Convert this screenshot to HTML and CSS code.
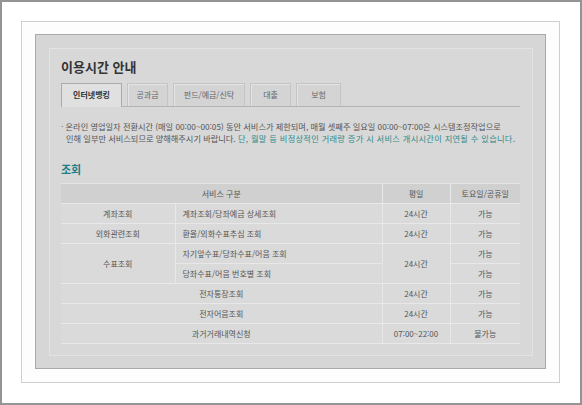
FILE: index.html
```html
<!DOCTYPE html>
<html lang="ko">
<head>
<meta charset="utf-8">
<title>이용시간 안내</title>
<link rel="stylesheet" href="styles.css">
</head>
<body>
<div class="frame">
  <div class="sheet">
    <div class="panel">
      <div class="inner">
        <h1 class="title">이용시간 안내</h1>
        <ul class="tabs">
          <li class="tab tab-active w1">인터넷뱅킹</li>
          <li class="tab w2">공과금</li>
          <li class="tab w3">펀드/예금/신탁</li>
          <li class="tab w4">대출</li>
          <li class="tab w5">보험</li>
        </ul>
        <p class="notice"><span class="dot">·</span> 온라인 영업일자 전환시간 (매일 00:00~00:05) 동안 서비스가 제한되며, 매월 셋째주 일요일 00:00~07:00은 시스템조정작업으로<br><span class="indent">인해 일부만 서비스되므로 양해해주시기 바랍니다. <span class="teal">단, 월말 등 비정상적인 거래량 증가 시 서비스 개시시간이 지연될 수 있습니다.</span></span></p>
        <h2 class="section">조회</h2>
        <table class="hours">
          <colgroup>
            <col class="c1"><col class="c2"><col class="c3"><col class="c4">
          </colgroup>
          <thead>
            <tr><th colspan="2">서비스 구분</th><th>평일</th><th>토요일/공휴일</th></tr>
          </thead>
          <tbody>
            <tr><td>계좌조회</td><td class="left">계좌조회/당좌예금 상세조회</td><td>24시간</td><td>가능</td></tr>
            <tr><td>외화관련조회</td><td class="left">환율/외화수표추심 조회</td><td>24시간</td><td>가능</td></tr>
            <tr><td rowspan="2">수표조회</td><td class="left">자기앞수표/당좌수표/어음 조회</td><td rowspan="2">24시간</td><td>가능</td></tr>
            <tr><td class="left">당좌수표/어음 번호별 조회</td><td>가능</td></tr>
            <tr><td colspan="2">전자통장조회</td><td>24시간</td><td>가능</td></tr>
            <tr><td colspan="2">전자어음조회</td><td>24시간</td><td>가능</td></tr>
            <tr><td colspan="2">과거거래내역신청</td><td>07:00~22:00</td><td>불가능</td></tr>
          </tbody>
        </table>
      </div>
    </div>
  </div>
</div>
</body>
</html>
```

FILE: styles.css
```css
* { box-sizing: border-box; }
html, body { margin: 0; padding: 0; background: #ffffff; }
body { font-family: "Noto Sans CJK KR", "Noto Sans", sans-serif; color: #555; }

.frame {
  width: 582px;
  height: 405px;
  border: 2px solid #949494;
  padding: 19px 0 0 19px;
  background: #fff;
}
.sheet {
  width: 539px;
  height: 362px;
  border: 1px solid #cfcfcf;
  background: #fdfdfd;
  padding: 12px 0 0 13px;
}
.panel {
  width: 511px;
  height: 335px;
  border: 1px solid #a9a9a9;
  background: #d6d6d6;
  padding: 13px 0 0 13px;
}
.inner {
  width: 484px;
  height: 308px;
  border: 1px solid #e3e3e3;
  background: #d8d8d8;
  padding: 10px 0 0 11px;
}
.title {
  margin: 0;
  font-size: 13px;
  line-height: 16px;
  font-weight: 700;
  color: #333;
}
.tabs {
  list-style: none;
  margin: 8px 0 0 0;
  padding: 0;
  width: 459px;
  display: flex;
  gap: 5px;
  border-bottom: 1px solid #b4b4b4;
  height: 24px;
}
.tab {
  height: 23px;
  border: 1px solid #c4c4c4;
  border-bottom: none;
  background: #d4d4d4;
  box-shadow: inset 1px 1px 0 #e4e4e4;
  font-size: 8px;
  line-height: 22px;
  text-align: center;
  color: #666;
}
.tab-active {
  background: #e0e0e0;
  border-color: #ababab;
  font-weight: 700;
  color: #333;
  height: 24px;
  box-shadow: none;
}
.w1 { width: 61px; }
.w2 { width: 41px; }
.w3 { width: 72px; }
.w4 { width: 41px; }
.w5 { width: 45px; }

.notice {
  margin: 13px 0 0 0;
  font-size: 8.2px;
  line-height: 12px;
  letter-spacing: 0;
  color: #555;
  white-space: nowrap;
}
.dot { color: #666; }
.indent { padding-left: 5px; }
.teal { color: #2e8b8b; letter-spacing: 0.32px; }

.section {
  margin: 18px 0 0 0;
  font-size: 11px;
  line-height: 14px;
  font-weight: 700;
  color: #237f86;
}
.hours {
  margin-top: 7px;
  width: 459px;
  border-collapse: collapse;
  table-layout: fixed;
  font-size: 8px;
  color: #555;
}
.c1 { width: 114px; }
.c2 { width: 207px; }
.c3 { width: 68px; }
.c4 { width: 70px; }
.hours th, .hours td {
  height: 20px;
  padding: 0;
  text-align: center;
  font-weight: 400;
  border: 1px solid #e8e8e8;
  border-left-color: #e2e2e2;
}
.hours tr > :first-child { border-left: none; }
.hours tr > :last-child { border-right: none; }
.hours th {
  background: #d0d0d0;
  border-top: 1px solid #e4e4e4;
}
.hours td { background: #dadada; }
.hours td.left { text-align: left; padding-left: 7px; }
```
